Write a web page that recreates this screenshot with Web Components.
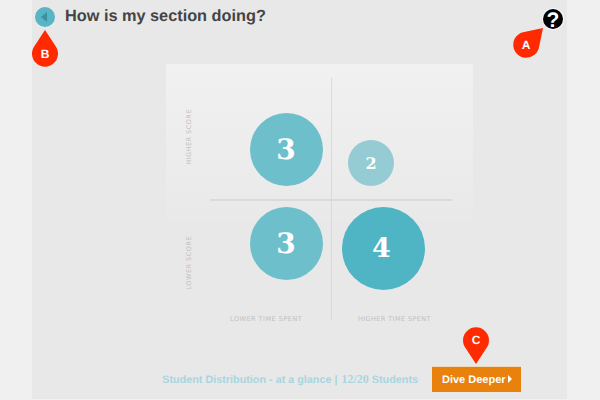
<!DOCTYPE html>
<html>
<head>
<meta charset="utf-8">
<title>How is my section doing?</title>
<style>
    html, body { margin: 0; height: 100%; background: #f0f0f0; overflow: hidden; }
    body { font-family: "Liberation Sans", Arial, sans-serif; text-rendering: geometricPrecision; }
</style>
</head>
<body>
<app-frame>
    <page-header slot="header" title-text="How is my section doing?"></page-header>
    <quadrant-chart slot="chart">
        <chart-bubble x="120" y="85" size="73" value="3" num-size="28" color="#6dbfcb"></chart-bubble>
        <chart-bubble x="205" y="99" size="46" value="2" num-size="16" color="#95ccd4"></chart-bubble>
        <chart-bubble x="120" y="179.5" size="73" value="3" num-size="28" color="#6dbfcb"></chart-bubble>
        <chart-bubble x="217" y="184" size="83" value="4" num-size="27" shift="3" color="#4fb4c3"></chart-bubble>
    </quadrant-chart>
    <footer-bar slot="footer" label="Student Distribution - at a glance |" count="12/20" unit="Students" action="Dive Deeper"></footer-bar>
</app-frame>
<map-pin letter="A" tip-x="543" tip-y="28" angle="-135"></map-pin>
<map-pin letter="B" tip-x="45" tip-y="30" angle="180"></map-pin>
<map-pin letter="C" tip-x="476" tip-y="364" angle="0"></map-pin>

<script>
class AppFrame extends HTMLElement {
    constructor() {
        super();
        this.attachShadow({mode: 'open'});
        this.shadowRoot.innerHTML = `
            <style>
                :host {
                    display: flex;
                    flex-direction: column;
                    box-sizing: border-box;
                    width: 535px;
                    height: 399px;
                    margin-left: 32px;
                    background: #e8e8e8;
                }
                .chart { display: flex; padding: 31px 0 0 134px; }
                .footer { margin-top: auto; padding-bottom: 7px; }
            </style>
            <slot name="header"></slot>
            <div class="chart"><slot name="chart"></slot></div>
            <div class="footer"><slot name="footer"></slot></div>
        `;
    }
}

class PageHeader extends HTMLElement {
    constructor() {
        super();
        this.attachShadow({mode: 'open'});
    }

    connectedCallback() {
        this.shadowRoot.innerHTML = `
            <style>
                :host {
                    display: flex;
                    align-items: center;
                    height: 33px;
                    padding: 0 3px 0 3px;
                }
                .back { flex: none; display: block; width: 20px; height: 20px; margin-top: 1px; }
                h1 {
                    flex: 1;
                    margin: 0 0 0 10px;
                    font: bold 16.3px "Liberation Sans", Arial, sans-serif;
                    color: #444;
                }
                .help { flex: none; display: block; width: 22px; height: 22px; margin-top: 4px; }
                .q {
                    font: bold 21px "Liberation Sans", Arial, sans-serif;
                    fill: #fff;
                }
            </style>
            <svg class="back" viewBox="0 0 20 20">
                <circle cx="10" cy="10" r="10" fill="#58b5c5"/>
                <path d="M6 10 L12 5 V15 Z" fill="#3e8fa0"/>
            </svg>
            <h1>${this.getAttribute('title-text')}</h1>
            <svg class="help" viewBox="0 0 22 22">
                <circle cx="11" cy="11" r="11" fill="#f6f6f6"/>
                <circle cx="11" cy="11" r="10" fill="#000"/>
                <text class="q" x="11" y="18.5" text-anchor="middle">?</text>
            </svg>
        `;
    }
}

class QuadrantChart extends HTMLElement {
    constructor() {
        super();
        this.attachShadow({mode: 'open'});
        this.shadowRoot.innerHTML = `
            <style>
                :host {
                    display: block;
                    position: relative;
                    width: 307px;
                    height: 258px;
                    background: linear-gradient(#f1f1f1, #e9e9e9) no-repeat 0 0 / 100% 158px;
                    font: 6.5px "DejaVu Sans", sans-serif;
                    letter-spacing: .5px;
                    color: #c0c0c0;
                }
                .v, .h { position: absolute; background: #dadada; }
                .v { left: 164.5px; top: 14px; width: 1.5px; height: 242px; }
                .h { left: 44px; top: 135px; width: 242px; height: 1.5px; }
                .label { position: absolute; white-space: nowrap; line-height: 8px; }
                .x { top: 251px; }
                .y { left: 19px; writing-mode: vertical-rl; transform: rotate(180deg); }
            </style>
            <div class="v"></div>
            <div class="h"></div>
            <span class="label y" style="top:45px">HIGHER SCORE</span>
            <span class="label y" style="top:172px">LOWER SCORE</span>
            <span class="label x" style="left:64px">LOWER TIME SPENT</span>
            <span class="label x" style="left:192px;letter-spacing:.4px">HIGHER TIME SPENT</span>
            <slot></slot>
        `;
    }
}

class ChartBubble extends HTMLElement {
    constructor() {
        super();
        this.attachShadow({mode: 'open'});
    }

    connectedCallback() {
        const size = this.getAttribute('size');
        const shift = this.getAttribute('shift') ?? 0;
        this.shadowRoot.innerHTML = `
            <style>
                :host {
                    position: absolute;
                    left: ${this.getAttribute('x') - size / 2}px;
                    top: ${this.getAttribute('y') - size / 2}px;
                    width: ${size}px;
                    height: ${size}px;
                    display: flex;
                    align-items: center;
                    justify-content: center;
                    border-radius: 50%;
                    background: ${this.getAttribute('color')};
                    color: #fff;
                    font: bold ${this.getAttribute('num-size')}px "DejaVu Serif", serif;
                    letter-spacing: 0;
                }
                span { margin-right: ${shift}px; }
            </style>
            <span>${this.getAttribute('value')}</span>
        `;
    }
}

class FooterBar extends HTMLElement {
    constructor() {
        super();
        this.attachShadow({mode: 'open'});
    }

    connectedCallback() {
        this.shadowRoot.innerHTML = `
            <style>
                :host {
                    display: flex;
                    align-items: center;
                    justify-content: flex-end;
                    gap: 14px;
                    padding-right: 46px;
                    font: bold 10.8px "Liberation Sans", Arial, sans-serif;
                    color: #a9d5de;
                }
                .count { font-family: "Liberation Serif", serif; font-size: 12px; margin-left: 1px; }
                button {
                    display: flex;
                    align-items: center;
                    gap: 2px;
                    width: 89px;
                    height: 26px;
                    padding: 0 0 0 10px;
                    border: 0;
                    border-top: 1px solid #f0d9b8;
                    background: #e8820c;
                    color: #fff;
                    font: bold 11px "Liberation Sans", Arial, sans-serif;
                    text-rendering: geometricPrecision;
                }
                button i { width: 0; height: 0; border-left: 4px solid #fff; border-top: 4px solid transparent; border-bottom: 4px solid transparent; margin-bottom: 2px; }
            </style>
            <span>${this.getAttribute('label')} <span class="count">${this.getAttribute('count')}</span> ${this.getAttribute('unit')}</span>
            <button>${this.getAttribute('action')}<i></i></button>
        `;
    }
}

class MapPin extends HTMLElement {
    constructor() {
        super();
        this.attachShadow({mode: 'open'});
    }

    connectedCallback() {
        const tipX = Number(this.getAttribute('tip-x'));
        const tipY = Number(this.getAttribute('tip-y'));
        const angle = this.getAttribute('angle');
        this.shadowRoot.innerHTML = `
            <style>
                :host {
                    position: absolute;
                    left: ${tipX - 20}px;
                    top: ${tipY - 40}px;
                    width: 40px;
                    height: 40px;
                }
                svg { display: block; overflow: visible; }
                text { font: bold 12px "Liberation Sans", Arial, sans-serif; fill: #fff; }
            </style>
            <svg width="40" height="40" viewBox="0 0 40 40">
                <path transform="rotate(${angle} 20 40)" d="M20 40 L9.5 24 A13 13 0 1 1 30.5 24 Z" fill="#ff2a00"/>
                <text id="t" text-anchor="middle">${this.getAttribute('letter')}</text>
            </svg>
        `;
        // letter stays upright, placed at the centre of the rotated body
        const rad = angle * Math.PI / 180;
        const cx = 20 + 24 * Math.sin(rad);
        const cy = 40 - 24 * Math.cos(rad);
        const t = this.shadowRoot.getElementById('t');
        t.setAttribute('x', cx);
        t.setAttribute('y', cy + 4);
    }
}

customElements.define('app-frame', AppFrame);
customElements.define('page-header', PageHeader);
customElements.define('quadrant-chart', QuadrantChart);
customElements.define('chart-bubble', ChartBubble);
customElements.define('footer-bar', FooterBar);
customElements.define('map-pin', MapPin);
</script>
</body>
</html>
